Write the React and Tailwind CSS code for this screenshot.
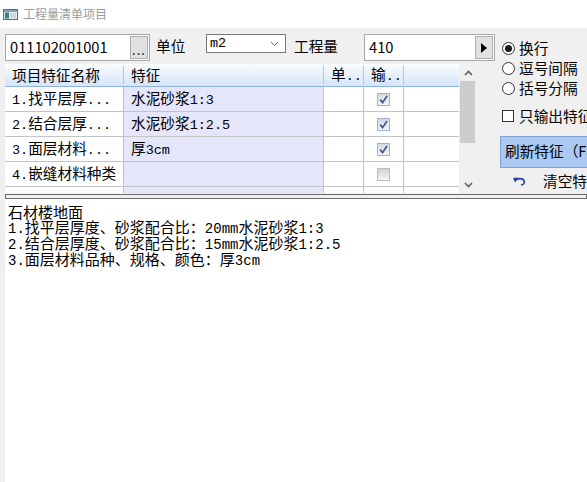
import React from "react";

const COLS = [119, 200, 40, 40, 55];

function Mixed({ text, mono }) {
  const parts = text.split(/([\x20-\x7e]+)/).filter((p) => p.length > 0);
  return (
    <>
      {parts.map((p, i) =>
        /^[\x20-\x7e]+$/.test(p) ? (
          <span key={i} className={"font-['Liberation_Mono',monospace] " + mono}>
            {p}
          </span>
        ) : (
          <span key={i}>{p}</span>
        )
      )}
    </>
  );
}

function WinIcon() {
  return (
    <svg width="15" height="11" viewBox="0 0 15 11">
      <rect x="0.5" y="0.5" width="14" height="10" fill="#e4ecf0" stroke="#5f6e7a" />
      <rect x="1" y="1" width="13" height="2" fill="#8aa0b0" />
      <rect x="2" y="3.5" width="4" height="6" fill="#3e7d84" />
      <rect x="7" y="4" width="6" height="5" fill="#c9d9df" />
    </svg>
  );
}

function CellCheck({ checked }) {
  return (
    <div
      className={
        "w-[13px] h-[13px] border flex items-center justify-center bg-linear-to-b " +
        (checked
          ? "border-[#9db4d4] from-[#d6d9de] to-[#f4f5f7]"
          : "border-[#b4bccb] from-[#cfd1d4] to-[#f6f6f6]")
      }
    >
      {checked && (
        <svg width="9" height="9" viewBox="0 0 9 9">
          <path d="M1.2 4.6 L3.6 7.6 L8 1" fill="none" stroke="#3a5891" strokeWidth="1.7" />
        </svg>
      )}
    </div>
  );
}

function Radio({ sel, label }) {
  return (
    <div className="h-[20px] flex items-center">
      <div className="w-[13px] h-[13px] rounded-full border border-[#333333] bg-white flex items-center justify-center">
        {sel && <div className="w-[7px] h-[7px] rounded-full bg-[#1a1a1a]" />}
      </div>
      <span className="ml-[4px] text-[14.67px] leading-none whitespace-nowrap">{label}</span>
    </div>
  );
}

function Chevron({ up }) {
  return (
    <svg width="9" height="6" viewBox="0 0 9 6">
      <path
        d={up ? "M1 5 L4.5 1.5 L8 5" : "M1 1 L4.5 4.5 L8 1"}
        fill="none"
        stroke="#606060"
        strokeWidth="1.6"
      />
    </svg>
  );
}

function UndoIcon() {
  return (
    <svg width="14" height="11" viewBox="0 0 14 11">
      <polygon points="0,2 5,1.5 2.2,6.5" fill="#1b3fa6" />
      <path d="M3 4 C5 2.2 9.5 2 11 4.5 C12.2 6.8 10.5 9 8 9" fill="none" stroke="#1b3fa6" strokeWidth="1.6" />
    </svg>
  );
}

const rows = [
  { name: "1.找平层厚...", feat: "水泥砂浆1:3", checked: true },
  { name: "2.结合层厚...", feat: "水泥砂浆1:2.5", checked: true },
  { name: "3.面层材料...", feat: "厚3cm", checked: true },
  { name: "4.嵌缝材料种类", feat: "", checked: false },
];

const LINES = [
  "石材楼地面",
  "1.找平层厚度、砂浆配合比：20mm水泥砂浆1:3",
  "2.结合层厚度、砂浆配合比：15mm水泥砂浆1:2.5",
  "3.面层材料品种、规格、颜色：厚3cm",
];

export default function App() {
  return (
    <div className="w-[587px] h-[482px] overflow-hidden bg-[#f0f0f0] flex flex-col font-['Noto_Sans_CJK_SC',sans-serif] text-black">
      {/* title bar */}
      <div className="h-[28px] shrink-0 flex items-center pl-[3px] bg-white">
        <WinIcon />
        <span className="ml-[5px] text-[12px] leading-none text-[#9c9c9c]">工程量清单项目</span>
      </div>

      {/* body */}
      <div className="flex pt-[6px] h-[165px] shrink-0">
        {/* left column */}
        <div className="w-[495px] shrink-0 pl-[5px] flex flex-col">
          {/* row 1 */}
          <div className="h-[27px] flex items-stretch text-[14.67px] leading-none">
            <div className="w-[145px] border border-[#a8a8a8] bg-white flex items-center">
              <span className="flex-1 pl-[4px] pb-[1px]">011102001001</span>
              <div className="w-[18px] h-[23px] mr-[1px] bg-[#e1e1e1] border border-[#adadad] flex items-end justify-center pb-[2px]">
                <span className="text-[13px] leading-none tracking-[1px]">...</span>
              </div>
            </div>
            <div className="w-[56px] pl-[6px] flex items-center pb-[2px]">单位</div>
            <div className="w-[80px] h-[19px] self-start border border-[#7a7a7a] bg-white flex items-center justify-between pl-[3px] pr-[6px]">
              <span className="text-[13.5px] leading-none font-['Liberation_Mono',monospace]">m2</span>
              <svg width="9" height="6" viewBox="0 0 9 6">
                <path d="M1 1 L4.5 4.5 L8 1" fill="none" stroke="#6a6a6a" strokeWidth="1" />
              </svg>
            </div>
            <div className="w-[78px] pl-[8px] flex items-center pb-[2px]">工程量</div>
            <div className="w-[131px] border border-[#a8a8a8] bg-white flex items-center">
              <span className="flex-1 pl-[4px] pb-[1px]">410</span>
              <div className="w-[18px] h-[23px] mr-[1px] bg-[#e1e1e1] border border-[#adadad] flex items-center justify-center">
                <svg width="6" height="10" viewBox="0 0 6 10">
                  <polygon points="0,0 6,5 0,10" fill="#000" />
                </svg>
              </div>
            </div>
          </div>

          {/* table */}
          <div className="mt-[3px] h-[129px] flex">
            <div className="w-[454px] flex flex-col bg-white overflow-hidden text-[14.67px] leading-none">
              {/* header */}
              <div className="h-[23px] shrink-0 flex items-center border-b border-[#8fb3e2] bg-linear-to-b from-[#fbfdff] to-[#d4e4f9]">
                {["项目特征名称", "特征", "单..", "输..", ""].map((h, i) => (
                  <div
                    key={i}
                    style={{ width: COLS[i] }}
                    className={
                      "h-[18px] flex items-center pl-[7px] whitespace-nowrap " +
                      (i < 4 ? "border-r border-[#a9c7ee]" : "")
                    }
                  >
                    <span>
                      <Mixed text={h} mono="text-[13.5px]" />
                    </span>
                  </div>
                ))}
              </div>
              {rows.map((r, ri) => (
                <div key={ri} className="h-[25px] shrink-0 flex border-b border-[#c4c4c4]">
                  <div style={{ width: COLS[0] }} className="border-r border-[#c4c4c4] flex items-center pl-[7px] whitespace-nowrap">
                    <span>
                      <Mixed text={r.name} mono="text-[13.5px]" />
                    </span>
                  </div>
                  <div style={{ width: COLS[1] }} className="border-r border-[#c4c4c4] bg-[#e6e6fa] flex items-center pl-[7px] whitespace-nowrap">
                    <span>
                      <Mixed text={r.feat} mono="text-[13.5px]" />
                    </span>
                  </div>
                  <div style={{ width: COLS[2] }} className="border-r border-[#c4c4c4]" />
                  <div style={{ width: COLS[3] }} className="border-r border-[#c4c4c4] flex items-center justify-center">
                    <CellCheck checked={r.checked} />
                  </div>
                  <div style={{ width: COLS[4] }} />
                </div>
              ))}
              <div className="flex-1 flex">
                <div style={{ width: COLS[0] }} className="border-r border-[#c4c4c4]" />
                <div style={{ width: COLS[1] }} className="border-r border-[#c4c4c4] bg-[#e6e6fa]" />
                <div style={{ width: COLS[2] }} className="border-r border-[#c4c4c4]" />
                <div style={{ width: COLS[3] }} className="border-r border-[#c4c4c4]" />
              </div>
            </div>
            {/* scrollbar */}
            <div className="w-[18px] flex flex-col bg-[#f0f0f0]">
              <div className="h-[17px] flex items-center justify-center pl-[1px]">
                <Chevron up />
              </div>
              <div className="ml-[1px] w-[15px] h-[62px] bg-[#cdcdcd]" />
              <div className="flex-1" />
              <div className="h-[17px] flex items-center justify-center pl-[1px]">
                <Chevron />
              </div>
            </div>
          </div>
        </div>

        {/* right panel */}
        <div className="flex-1 pl-[7px] flex flex-col pt-[4px]">
          <Radio sel label="换行" />
          <Radio label="逗号间隔" />
          <Radio label="括号分隔" />
          <div className="h-[20px] mt-[8px] flex items-center">
            <div className="w-[12px] h-[12px] border border-[#333333] bg-white" />
            <span className="ml-[5px] text-[14.67px] leading-none whitespace-nowrap">只输出特征</span>
          </div>
          <div className="mt-[10px] -ml-[2px] h-[32px] w-[110px] bg-[#a9c9f2] border border-[#7fa3d3] flex items-center pl-[4px] pb-[1px] text-[14.67px] leading-none whitespace-nowrap">
            刷新特征（F8）
          </div>
          <div className="h-[20px] mt-[3px] flex items-center pl-[11px]">
            <UndoIcon />
            <span className="ml-[16px] text-[14.67px] leading-none whitespace-nowrap">清空特征</span>
          </div>
        </div>
      </div>

      {/* splitter */}
      <div className="ml-[5px] mt-[1px] h-[5px] shrink-0 border border-[#6b6b6b] bg-[#f0f0f0]" />

      {/* text area */}
      <div className="ml-[5px] flex-1 bg-white pt-[4px] pl-[3px] text-[15px] leading-none">
        {LINES.map((l, i) => (
          <div key={i} className="h-[16px] flex items-center whitespace-nowrap">
            <span>
              <Mixed text={l} mono="text-[14px]" />
            </span>
          </div>
        ))}
      </div>
    </div>
  );
}
